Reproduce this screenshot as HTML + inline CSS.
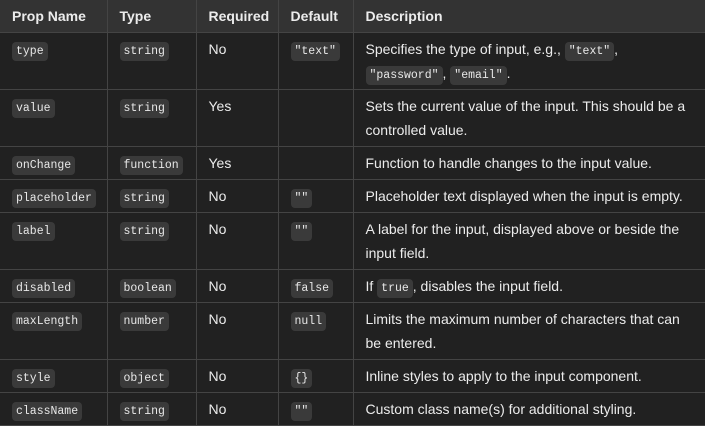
<!DOCTYPE html>
<html><head><style>
body{margin:0;background:#212121;width:705px;height:422px;overflow:hidden;font-family:"Liberation Sans",sans-serif;}
table{border-collapse:collapse;table-layout:fixed;width:706px;color:#ececec;font-size:14px;}
th,td{border:1px solid #444;padding:0 12px;text-align:left;vertical-align:top;line-height:24px;overflow:hidden;}
th{background:#333;font-weight:bold;height:32px;vertical-align:middle;}
td{padding-top:4px;padding-bottom:4px;}
tr.s td{height:24px}
tr.d td{height:48px}
th:first-child,td:first-child{border-left:none}
tr:first-child th{border-top:none}
code{font-family:"Liberation Mono",monospace;font-size:11.5px;line-height:1;background:#3a3a3a;border-radius:4px;padding:3px 4px;color:#e8e8e8;}
</style></head><body>
<table>
<colgroup><col style="width:107px"><col style="width:89px"><col style="width:82px"><col style="width:75px"><col></colgroup>
<tr><th>Prop Name</th><th>Type</th><th>Required</th><th>Default</th><th>Description</th></tr>
<tr class="d"><td><code>type</code></td><td><code>string</code></td><td>No</td><td><code>"text"</code></td><td>Specifies the type of input, e.g., <code>"text"</code>, <code>"password"</code>, <code>"email"</code>.</td></tr>
<tr class="d"><td><code>value</code></td><td><code>string</code></td><td>Yes</td><td></td><td>Sets the current value of the input. This should be a controlled value.</td></tr>
<tr class="s"><td><code>onChange</code></td><td><code>function</code></td><td>Yes</td><td></td><td>Function to handle changes to the input value.</td></tr>
<tr class="s"><td><code>placeholder</code></td><td><code>string</code></td><td>No</td><td><code>""</code></td><td>Placeholder text displayed when the input is empty.</td></tr>
<tr class="d"><td><code>label</code></td><td><code>string</code></td><td>No</td><td><code>""</code></td><td>A label for the input, displayed above or beside the input field.</td></tr>
<tr class="s"><td><code>disabled</code></td><td><code>boolean</code></td><td>No</td><td><code>false</code></td><td>If <code>true</code>, disables the input field.</td></tr>
<tr class="d"><td><code>maxLength</code></td><td><code>number</code></td><td>No</td><td><code>null</code></td><td>Limits the maximum number of characters that can be entered.</td></tr>
<tr class="s"><td><code>style</code></td><td><code>object</code></td><td>No</td><td><code>{}</code></td><td>Inline styles to apply to the input component.</td></tr>
<tr class="s"><td><code>className</code></td><td><code>string</code></td><td>No</td><td><code>""</code></td><td>Custom class name(s) for additional styling.</td></tr>
</table>
</body></html>
